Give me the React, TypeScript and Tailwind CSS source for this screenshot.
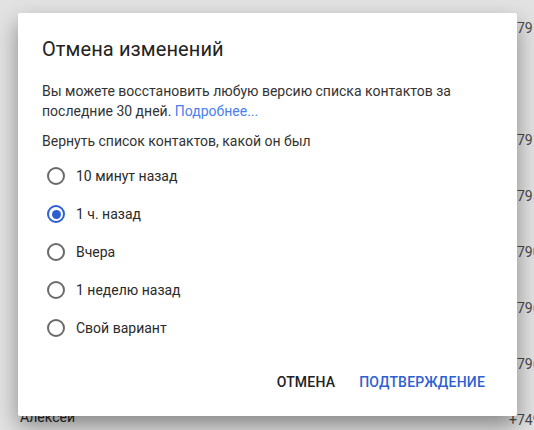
import { useState } from "react";

const rows = [
  { name: "", phone: "+79161234567" },
  { name: "", phone: "" },
  { name: "", phone: "+79167654321" },
  { name: "", phone: "+79551112233" },
  { name: "", phone: "+79032223344" },
  { name: "", phone: "+79684445566" },
  { name: "", phone: "+79637778899" },
  { name: "Алексей", phone: "+74951234567" },
];

const options = ["10 минут назад", "1 ч. назад", "Вчера", "1 неделю назад", "Свой вариант"];

function Radio({ checked }: { checked: boolean }) {
  return (
    <span
      className={
        checked
          ? "ml-[5px] w-[18px] h-[18px] rounded-full border-2 border-[#2d5fd3] flex items-center justify-center shrink-0"
          : "ml-[5px] w-[18px] h-[18px] rounded-full border-2 border-[#6a6a6a] flex items-center justify-center shrink-0"
      }
    >
      {checked ? <span className="w-[9px] h-[9px] rounded-full bg-[#2d5fd3]" /> : null}
    </span>
  );
}

export default function App() {
  const [selected, setSelected] = useState(1);

  return (
    <div className="relative w-[534px] h-[430px] overflow-hidden bg-[#e2e2e2] font-['Roboto',sans-serif] text-sm">
      {/* contacts list behind the overlay */}
      <div className="flex flex-col">
        {rows.map((r, i) => (
          <div key={i} className="h-14 flex items-center">
            <div className="w-[509px] shrink-0 pl-5 pb-1.5 text-[#262626]">{r.name}</div>
            <div className="shrink-0 whitespace-nowrap text-[#4a4a4a]">{r.phone}</div>
          </div>
        ))}
      </div>

      {/* dialog */}
      <div className="absolute left-[18px] top-[13px] w-[499px] bg-white rounded-[2px] shadow-[0_10px_22px_rgba(0,0,0,0.4)] px-6 pt-6 pb-4">
        <h2 className="text-[20px] leading-6 text-[#222] tracking-[0.1px]">Отмена изменений</h2>
        <p className="mt-5 text-sm leading-5 text-[#333] pr-6">
          Вы можете восстановить любую версию списка контактов за последние 30 дней.{" "}
          <a className="text-[#4a7ff0]" href="#">Подробнее...</a>
        </p>
        <p className="mt-2.5 text-sm leading-5 text-[#333]">Вернуть список контактов, какой он был</p>

        <div className="mt-1.5 flex flex-col">
          {options.map((o, i) => (
            <label key={o} className="h-[38px] flex items-center cursor-pointer" onClick={() => setSelected(i)}>
              <Radio checked={selected === i} />
              <span className="ml-[11px] text-sm text-[#2a2a2a]">{o}</span>
            </label>
          ))}
        </div>

        <div className="mt-[17px] flex justify-end gap-2">
          <button className="h-9 px-2 text-sm font-medium text-[#222] uppercase tracking-[0.2px]">Отмена</button>
          <button className="h-9 px-2 text-sm font-medium text-[#2d5fd3] uppercase tracking-[0.2px]">Подтверждение</button>
        </div>
      </div>
    </div>
  );
}
